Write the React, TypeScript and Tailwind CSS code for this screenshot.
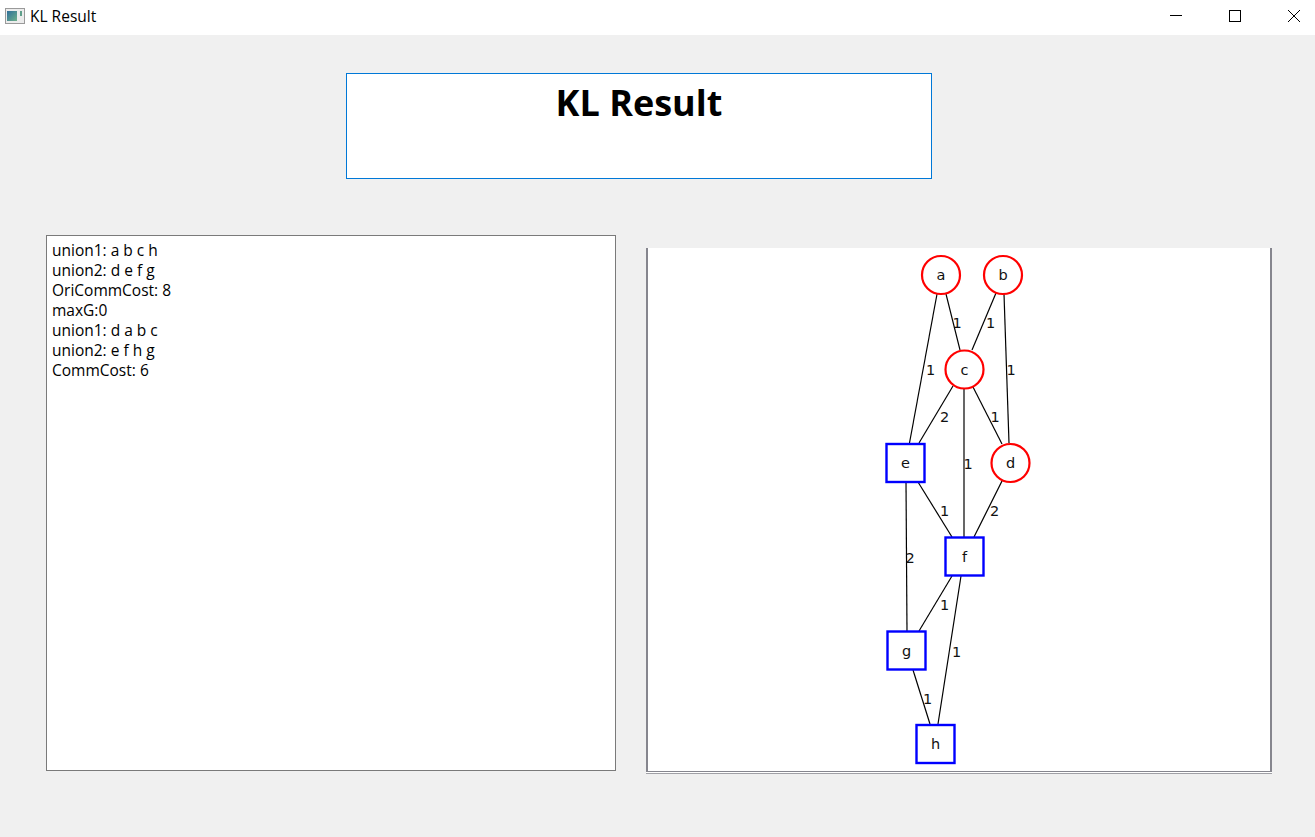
const uiFont = "font-['Open_Sans','Noto_Sans',sans-serif]";

const lines = [
  'union1: a b c h',
  'union2: d e f g',
  'OriCommCost: 8',
  'maxG:0',
  'union1: d a b c',
  'union2: e f h g',
  'CommCost: 6',
];

// graph coordinates are in page pixels, the svg viewBox starts at the panel's corner
const edges = [
  [937, 294, 909.5, 443],
  [946, 294, 960, 350],
  [996, 293, 972, 350],
  [1004, 294, 1009, 443],
  [953, 386, 919, 443],
  [964, 388, 964, 537],
  [973, 387, 1002, 444],
  [918, 482, 952, 537],
  [906, 482, 907, 631],
  [1002, 481, 974, 537],
  [952, 576, 919, 631],
  [961, 576, 938, 724],
  [913, 670, 930, 724],
];

const weights: [number, number, string][] = [
  [957, 322, '1'],
  [990.5, 322, '1'],
  [930.5, 369, '1'],
  [1011, 369, '1'],
  [944.5, 416, '2'],
  [995, 416, '1'],
  [968, 463, '1'],
  [944.5, 510, '1'],
  [994.5, 510, '2'],
  [910, 557, '2'],
  [944.5, 604, '1'],
  [956.5, 651, '1'],
  [927.5, 698, '1'],
];

const circles: [number, number, string][] = [
  [941, 275, 'a'],
  [1003, 275, 'b'],
  [964.5, 369.5, 'c'],
  [1010.5, 463, 'd'],
];

const squares: [number, number, string][] = [
  [905.5, 463, 'e'],
  [964.5, 556.5, 'f'],
  [906.5, 650.5, 'g'],
  [935.5, 744, 'h'],
];

function Graph() {
  return (
    <svg viewBox="648 248 622 523" className="block w-full h-full font-['DejaVu_Sans',sans-serif]">
      {edges.map((e, i) => (
        <line key={i} x1={e[0]} y1={e[1]} x2={e[2]} y2={e[3]} stroke="#000" strokeWidth="1.2" />
      ))}
      {weights.map(([x, y, t], i) => (
        <text key={i} x={x} y={y} dy="5.5" textAnchor="middle" fontSize="14.5" fill="#111">{t}</text>
      ))}
      {circles.map(([x, y, t]) => (
        <g key={t}>
          <circle cx={x} cy={y} r="19" fill="#fff" stroke="#f00" strokeWidth="2.2" />
          <text x={x} y={y} dy="5" textAnchor="middle" fontSize="14.5" fill="#111">{t}</text>
        </g>
      ))}
      {squares.map(([x, y, t]) => (
        <g key={t}>
          <rect x={x - 19} y={y - 19} width="38" height="38" fill="#fff" stroke="#00f" strokeWidth="2.4" />
          <text x={x} y={y} dy="5" textAnchor="middle" fontSize="14.5" fill="#111">{t}</text>
        </g>
      ))}
    </svg>
  );
}

export default function App() {
  return (
    <div className={`w-[1315px] h-[837px] overflow-hidden flex flex-col bg-[#f0f0f0] text-black ${uiFont}`}>
      <div className="h-[35px] shrink-0 bg-white flex items-center">
        <svg width="20" height="16" viewBox="0 0 20 16" className="ml-[5px] mr-[5px] mb-[3px]">
          <defs>
            <linearGradient id="winIcon" x1="0" y1="0" x2="1" y2="1">
              <stop offset="0" stopColor="#2f6f9a" />
              <stop offset="1" stopColor="#6fb08a" />
            </linearGradient>
          </defs>
          <rect x="0.5" y="0.5" width="19" height="15" fill="#ececec" stroke="#9a9a9a" />
          <rect x="2" y="3" width="10" height="10" fill="url(#winIcon)" />
          <rect x="15" y="3" width="2" height="5" fill="#5f9f8a" />
        </svg>
        <span className="text-[15.5px] mb-[1px]">KL Result</span>
        <div className="ml-auto mr-[15px] pb-[3px] flex items-center gap-[47px]">
          <svg width="12" height="12" viewBox="0 0 12 12">
            <path d="M0 5.5H12" stroke="#000" strokeWidth="1" fill="none" />
          </svg>
          <svg width="12" height="12" viewBox="0 0 12 12">
            <rect x="0.5" y="0.5" width="11" height="11" stroke="#000" strokeWidth="1" fill="none" />
          </svg>
          <svg width="12" height="12" viewBox="0 0 12 12">
            <path d="M0 0L12 12M12 0L0 12" stroke="#000" strokeWidth="1" fill="none" />
          </svg>
        </div>
      </div>

      <div className="mt-[38px] ml-[346px] w-[586px] h-[106px] shrink-0 bg-white border border-[#0078d7] text-center">
        <h1 className="text-[36px] leading-[58px] font-bold">KL Result</h1>
      </div>

      <div className="mt-[56px] ml-[46px] flex items-start gap-[30px]">
        <div className="w-[570px] h-[536px] bg-white border border-[#7a7a7a] pl-[5px] pt-[4px] text-[15.5px] leading-[20px]">
          {lines.map((l, i) => (
            <div key={i}>{l}</div>
          ))}
        </div>
        <div className="mt-[13px] w-[626px] h-[526px] bg-white pb-[1px] border-b border-[#a0a0a6]">
          <div className="w-full h-full border-l-2 border-r-2 border-b border-[#86868e]">
            <Graph />
          </div>
        </div>
      </div>
    </div>
  );
}
